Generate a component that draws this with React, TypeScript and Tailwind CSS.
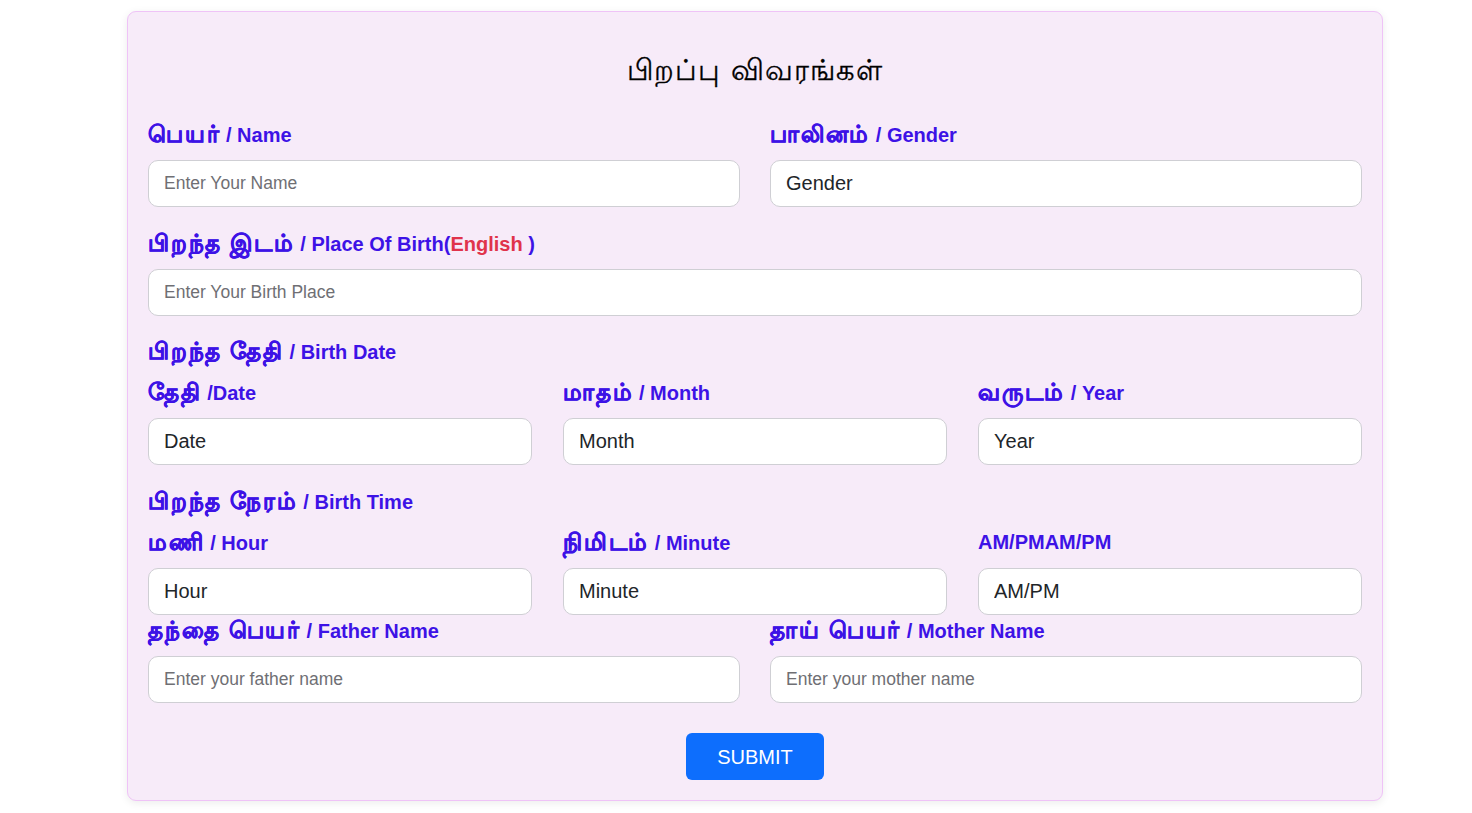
import React from 'react';

const font = { fontFamily: '"Liberation Sans", Arial, sans-serif' };

type FieldProps = {
  ta?: string;
  en: React.ReactNode;
  value?: string;
  placeholder?: string;
};

// tamil glyphs come out thin and narrow here, so give them a bit more body
const Ta: React.FC<{ children: React.ReactNode }> = ({ children }) => (
  <span className="text-[23px] tracking-[1.8px] [-webkit-text-stroke:0.6px_#3d12e6]">
    {children}
  </span>
);

const Label: React.FC<{ ta?: string; en: React.ReactNode; className?: string }> = ({
  ta,
  en,
  className = '',
}) => (
  <div
    className={`h-[30px] text-[20px] leading-[30px] font-bold text-[#3d12e6] whitespace-nowrap ${className}`}
  >
    {ta && (
      <>
        <Ta>{ta}</Ta>{' '}
      </>
    )}
    {en}
  </div>
);

const Field: React.FC<FieldProps> = ({ ta, en, value, placeholder }) => (
  <div className="flex flex-col">
    <Label ta={ta} en={en} className="mb-[11px]" />
    {value ? (
      <input
        readOnly
        value={value}
        className="h-[47px] w-full rounded-[10px] border border-[#cfcfd4] bg-white px-[15px] text-[20px] text-[#212529] outline-none"
      />
    ) : (
      <input
        placeholder={placeholder}
        className="h-[47px] w-full rounded-[10px] border border-[#cfcfd4] bg-white px-[15px] text-[17.5px] text-[#212529] outline-none placeholder:text-[#6f6f74]"
      />
    )}
  </div>
);

export default function App() {
  return (
    <div className="min-h-[813px] w-full bg-white pt-[11px]" style={font}>
      <form className="ml-[127px] w-[1256px] rounded-[9px] border border-[#efc3f7] bg-[#f7ebf9] px-5 pt-5 pb-5 shadow-[0_2px_8px_rgba(0,0,0,0.08)]">
        <h2 className="mt-[20px] mb-[31px] text-center text-[29px] leading-[36px] tracking-[1px] text-black [-webkit-text-stroke:0.3px_#000]">
          பிறப்பு விவரங்கள்
        </h2>

        <div className="grid grid-cols-2 gap-x-[30px]">
          <Field ta="பெயர்" en="/ Name" placeholder="Enter Your Name" />
          <Field ta="பாலினம்" en="/ Gender" value="Gender" />
        </div>

        <div className="mt-[21px]">
          <Field
            ta="பிறந்த இடம்"
            en={
              <>
                / Place Of Birth(<span className="text-[#e0334b]">English</span> )
              </>
            }
            placeholder="Enter Your Birth Place"
          />
        </div>

        <Label ta="பிறந்த தேதி" en="/ Birth Date" className="mt-5 mb-[11px]" />
        <div className="grid grid-cols-3 gap-x-[31px]">
          <Field ta="தேதி" en="/Date" value="Date" />
          <Field ta="மாதம்" en="/ Month" value="Month" />
          <Field ta="வருடம்" en="/ Year" value="Year" />
        </div>

        <Label ta="பிறந்த நேரம்" en="/ Birth Time" className="mt-[21px] mb-[11px]" />
        <div className="grid grid-cols-3 gap-x-[31px]">
          <Field ta="மணி" en="/ Hour" value="Hour" />
          <Field ta="நிமிடம்" en="/ Minute" value="Minute" />
          <Field en="AM/PMAM/PM" value="AM/PM" />
        </div>

        <div className="grid grid-cols-2 gap-x-[30px]">
          <Field ta="தந்தை பெயர்" en="/ Father Name" placeholder="Enter your father name" />
          <Field ta="தாய் பெயர்" en="/ Mother Name" placeholder="Enter your mother name" />
        </div>

        <div className="mt-[30px] flex justify-center">
          <button
            type="button"
            className="h-[47px] rounded-[6px] bg-[#0d6efd] px-[31px] text-[20px] text-white"
          >
            SUBMIT
          </button>
        </div>
      </form>
    </div>
  );
}
